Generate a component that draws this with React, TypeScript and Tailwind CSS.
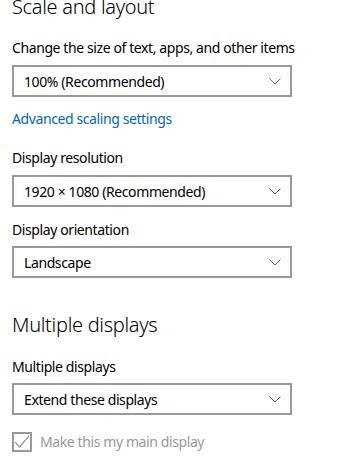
function Chevron() {
  return (
    <svg width="12" height="7" viewBox="0 0 12 7" className="shrink-0">
      <path d="M0.5 0.5 L6 6 L11.5 0.5" fill="none" stroke="#666" strokeWidth="1" />
    </svg>
  );
}

function Dropdown({ value }: { value: string }) {
  return (
    <div className="flex h-[32px] w-[280px] items-center justify-between border-2 border-[#999] bg-white pl-[10px] pr-[9px] text-[14px] tracking-[-0.4px] text-black">
      <span>{value}</span>
      <Chevron />
    </div>
  );
}

function Label({ text, className = "" }: { text: string; className?: string }) {
  return (
    <div className={`h-[20px] text-[14px] leading-[20px] tracking-[-0.4px] text-black ${className}`}>{text}</div>
  );
}

export default function App() {
  return (
    <div
      className="h-[462px] w-[337px] overflow-hidden bg-white pl-[12px]"
      style={{ fontFamily: '"Segoe UI", "Noto Sans", sans-serif' }}
    >
      <h2 className="-mt-[7px] h-[28px] text-[20px] leading-[28px] font-light tracking-[-0.3px] text-black">
        Scale and layout
      </h2>

      <Label text="Change the size of text, apps, and other items" className="mt-[17px]" />
      <div className="mt-[7px]">
        <Dropdown value="100% (Recommended)" />
      </div>

      <div className="mt-[12px] h-[20px] text-[14px] leading-[20px] tracking-[-0.4px] text-[#0067c0]">
        Advanced scaling settings
      </div>

      <Label text="Display resolution" className="mt-[19px]" />
      <div className="mt-[7px]">
        <Dropdown value="1920 × 1080 (Recommended)" />
      </div>

      <Label text="Display orientation" className="mt-[13px]" />
      <div className="mt-[6px]">
        <Dropdown value="Landscape" />
      </div>

      <h2 className="mt-[33px] h-[28px] text-[20px] leading-[28px] font-light tracking-[-0.3px] text-black">
        Multiple displays
      </h2>

      <Label text="Multiple displays" className="mt-[18px]" />
      <div className="mt-[6px]">
        <Dropdown value="Extend these displays" />
      </div>

      <div className="mt-[17px] flex items-center gap-[8px]">
        <div className="flex h-[20px] w-[20px] items-center justify-center border-2 border-[#999]">
          <svg width="16" height="14" viewBox="0 0 16 14">
            <path d="M1 7 L5.5 12 L15 1" fill="none" stroke="#999" strokeWidth="1.2" />
          </svg>
        </div>
        <span className="text-[14px] leading-[20px] tracking-[-0.4px] text-[#999]">Make this my main display</span>
      </div>
    </div>
  );
}
